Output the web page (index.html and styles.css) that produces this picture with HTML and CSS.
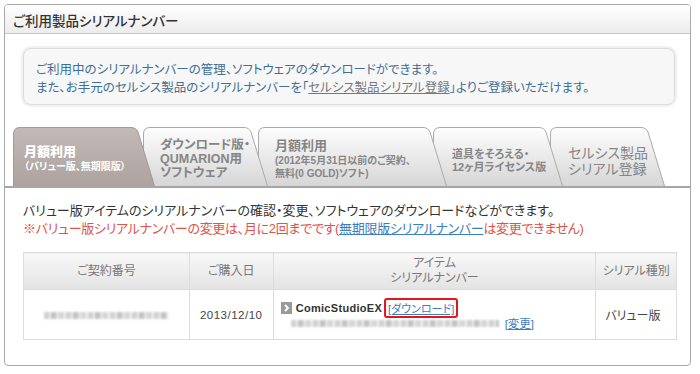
FILE: index.html
```html
<!DOCTYPE html>
<html lang="ja">
<head>
  <meta charset="UTF-8" />
  <meta name="viewport" content="width=device-width, initial-scale=1.0" />
  <title>ご利用製品シリアルナンバー</title>
  <link rel="stylesheet" href="styles.css">
</head>
<body>
  <div class="panel">
    <div class="panel-header">
      <h1>ご利用製品シリアルナンバー</h1>
    </div>

    <div class="panel-body">
      <div class="info-box">
        <p>ご利用中のシリアルナンバーの管理、ソフトウェアのダウンロードができます。</p>
        <p>また、お手元のセルシス製品のシリアルナンバーを「<a href="#" class="info-link">セルシス製品シリアル登録</a>」よりご登録いただけます。</p>
      </div>
    </div>

    <nav class="tabs">
      <a href="#" class="tab tab-1 active">
        <svg class="tab-bg" width="142" height="59" viewBox="0 0 142 59">
          <defs>
            <linearGradient id="gradActive" x1="0" y1="0" x2="0" y2="1">
              <stop offset="0" stop-color="#c3bab7" />
              <stop offset="1" stop-color="#aca29f" />
            </linearGradient>
            <linearGradient id="gradTab" x1="0" y1="0" x2="0" y2="1">
              <stop offset="0" stop-color="#fdfdfd" />
              <stop offset="1" stop-color="#d6d6d6" />
            </linearGradient>
          </defs>
          <path d="M0.5,59 V7 Q0.5,0.5 7,0.5 H118 Q123,0.5 125,5 L141.5,59" fill="url(#gradActive)" stroke="#a39996" />
        </svg>
        <span class="tab-text">
          <strong class="tab-title">月額利用</strong>
          <small class="tab-sub">（バリュー版、無期限版）</small>
        </span>
      </a>
      <a href="#" class="tab tab-2">
        <svg class="tab-bg" width="125" height="59" viewBox="0 0 125 59">
          <path d="M0.5,59 V7 Q0.5,0.5 7,0.5 H101 Q106,0.5 108,5 L124.5,59" fill="url(#gradTab)" stroke="#aaa" />
        </svg>
        <span class="tab-text">
          <span class="tab-line">ダウンロード版・</span>
          <span class="tab-line">QUMARION用</span>
          <span class="tab-line">ソフトウェア</span>
        </span>
      </a>
      <a href="#" class="tab tab-3">
        <svg class="tab-bg" width="189" height="59" viewBox="0 0 189 59">
          <path d="M0.5,59 V7 Q0.5,0.5 7,0.5 H165 Q170,0.5 172,5 L188.5,59" fill="url(#gradTab)" stroke="#aaa" />
        </svg>
        <span class="tab-text">
          <span class="tab-line">月額利用</span>
          <small class="tab-sub">(2012年5月31日以前のご契約、</small>
          <small class="tab-sub">無料(0 GOLD)ソフト)</small>
        </span>
      </a>
      <a href="#" class="tab tab-4">
        <svg class="tab-bg" width="130" height="59" viewBox="0 0 130 59">
          <path d="M0.5,59 V7 Q0.5,0.5 7,0.5 H106 Q111,0.5 113,5 L129.5,59" fill="url(#gradTab)" stroke="#aaa" />
        </svg>
        <span class="tab-text">
          <small class="tab-sub">道具をそろえる・</small>
          <small class="tab-sub">12ヶ月ライセンス版</small>
        </span>
      </a>
      <a href="#" class="tab tab-5">
        <svg class="tab-bg" width="115" height="59" viewBox="0 0 115 59">
          <path d="M0.5,59 V7 Q0.5,0.5 7,0.5 H91 Q96,0.5 98,5 L114.5,59" fill="url(#gradTab)" stroke="#aaa" />
        </svg>
        <span class="tab-text">
          <span class="tab-line">セルシス製品</span>
          <span class="tab-line">シリアル登録</span>
        </span>
      </a>
    </nav>

    <div class="panel-body">
      <div class="description">
        <p>バリュー版アイテムのシリアルナンバーの確認・変更、ソフトウェアのダウンロードなどができます。</p>
        <p class="note">※バリュー版シリアルナンバーの変更は、月に2回までです(<a href="#">無期限版シリアルナンバー</a>は変更できません)</p>
      </div>

      <table class="serial-table">
        <thead>
          <tr>
            <th class="col-contract">ご契約番号</th>
            <th class="col-date">ご購入日</th>
            <th class="col-item">アイテム<br>シリアルナンバー</th>
            <th class="col-type">シリアル種別</th>
          </tr>
        </thead>
        <tbody>
          <tr>
            <td class="center"><span class="blurred blurred-contract"></span></td>
            <td class="center date">2013/12/10</td>
            <td class="item-cell">
              <div class="item-line">
                <span class="arrow-icon">
                  <svg width="11" height="12" viewBox="0 0 11 12"><path d="M4,3 L7,6 L4,9" fill="none" stroke="#fff" stroke-width="1.8" /></svg>
                </span>
                <span class="product-name">ComicStudioEX</span>
                <a href="#" class="download-link">[ダウンロード]</a>
              </div>
              <div class="serial-line">
                <span class="blurred blurred-serial"></span>
                <a href="#" class="change-link">[変更]</a>
              </div>
            </td>
            <td class="type">バリュー版</td>
          </tr>
        </tbody>
      </table>
    </div>
  </div>
</body>
</html>
```

FILE: styles.css
```css
body {
  font-family: "Liberation Sans", "Noto Sans CJK JP", sans-serif;
  font-feature-settings: "palt";
  background-color: #fff;
  margin: 0;
  padding: 4px;
  color: #333;
}

p {
  margin: 0;
}

.panel {
  width: 687px;
  height: 362px;
  border: 1px solid #a9a9a9;
  border-radius: 4px;
  background-color: #fff;
  box-sizing: border-box;
  overflow: hidden;
}

.panel-header {
  height: 28px;
  padding-left: 8px;
  display: flex;
  align-items: center;
  background: linear-gradient(#ffffff, #ececec);
  border-bottom: 1px solid #c8c8c8;
}
.panel-header h1 {
  margin: 0;
  font-size: 13.5px;
  font-weight: 500;
  color: #333;
  padding-top: 2px;
}

.panel-body {
  padding: 0 15px 0 18px;
}

.info-box {
  margin-top: 14px;
  padding: 12px 12px 7px 12px;
  border: 1px solid #dcdcdc;
  border-radius: 8px;
  background-color: #f7f7f7;
  box-shadow: 0 0 0 2px #f1f1f1;
  color: #3e6f96;
  font-size: 12.5px;
  line-height: 18px;
}
.info-link {
  color: #777;
  text-decoration: underline;
}

/* タブ */
.tabs {
  display: flex;
  margin-top: 22px;
  padding-left: 8px;
  border-bottom: 2px solid #a6a6a6;
}
.tab {
  position: relative;
  height: 59px;
  display: flex;
  align-items: center;
  padding-top: 4px;
  box-sizing: border-box;
  text-decoration: none;
  color: #858585;
  font-weight: bold;
}
.tab-bg {
  position: absolute;
  left: 0;
  top: 0;
}
.tab-text {
  position: relative;
  display: flex;
  flex-direction: column;
}
.tab-1 { width: 142px; z-index: 5; padding-left: 11px; }
.tab-2 { width: 125px; z-index: 4; margin-left: -12px; padding-left: 17px; }
.tab-3 { width: 189px; z-index: 3; margin-left: -10px; padding-left: 17px; }
.tab-4 { width: 130px; z-index: 2; margin-left: -14px; padding-left: 19px; padding-top: 8px; }
.tab-5 { width: 115px; z-index: 1; margin-left: -13px; padding-left: 18px; padding-top: 8px; }

.tab.active {
  color: #fff;
}
.tab-title {
  font-size: 13px;
  line-height: 16px;
}
.tab-line {
  font-size: 12.5px;
  line-height: 14px;
}
.tab-3 .tab-line {
  font-size: 13px;
  line-height: 16px;
}
.tab-5 .tab-line {
  font-size: 14px;
  line-height: 16px;
  font-weight: normal;
}
.tab-sub {
  font-size: 10px;
  line-height: 13px;
}
.tab-4 .tab-sub {
  font-size: 11px;
}

/* 説明 */
.description {
  margin-top: 14px;
  font-size: 13px;
  line-height: 18px;
  color: #333;
}
.note {
  color: #e0524c;
  letter-spacing: -0.3px;
}
.note a {
  color: #3b7dbd;
  text-decoration: underline;
}

/* テーブル */
.serial-table {
  width: 654px;
  margin-top: 14px;
  border-collapse: collapse;
  font-size: 12px;
}
.serial-table th,
.serial-table td {
  border: 1px solid #dcdcdc;
}
.serial-table th {
  height: 36px;
  padding: 0;
  background: linear-gradient(#f8f8f8, #e3e3e3);
  color: #777;
  font-weight: normal;
  line-height: 15px;
}
.col-contract { width: 165px; }
.col-date { width: 83px; }
.col-item { width: 322px; }
.col-type { width: 80px; }

.serial-table td {
  height: 49px;
  padding: 0;
}
.center {
  text-align: center;
}
.date {
  color: #444;
  font-size: 11.5px;
  letter-spacing: 0.5px;
}

.blurred {
  display: inline-block;
  height: 7px;
  background: repeating-linear-gradient(90deg, #c9c9c9 0 5px, #e8e8e8 5px 7px, #b9b9b9 7px 12px, #dedede 12px 15px, #cfcfcf 15px 20px, #f0f0f0 20px 22px);
  filter: blur(0.8px);
  opacity: 0.85;
}
.blurred-contract {
  width: 124px;
}
.blurred-serial {
  width: 208px;
}

.item-cell {
  padding-left: 7px !important;
}
.item-line {
  display: flex;
  align-items: center;
}
.arrow-icon {
  display: inline-flex;
  width: 11px;
  height: 12px;
  background-color: #9a9a9a;
  margin-right: 4px;
}
.product-name {
  font-size: 11px;
  font-weight: bold;
  color: #333;
  letter-spacing: 0.3px;
}
.download-link {
  margin-left: 2px;
  padding: 0 2px;
  border: 2px solid #e8141b;
  border-radius: 3px;
  color: #3b7dbd;
  font-size: 11px;
  text-decoration: underline;
}
.serial-line {
  display: flex;
  align-items: center;
  margin-top: -3px;
  padding-left: 10px;
}
.change-link {
  margin-left: 6px;
  color: #3b7dbd;
  font-size: 11.5px;
  text-decoration: underline;
}
.type {
  padding-left: 9px !important;
  color: #444;
}
```
